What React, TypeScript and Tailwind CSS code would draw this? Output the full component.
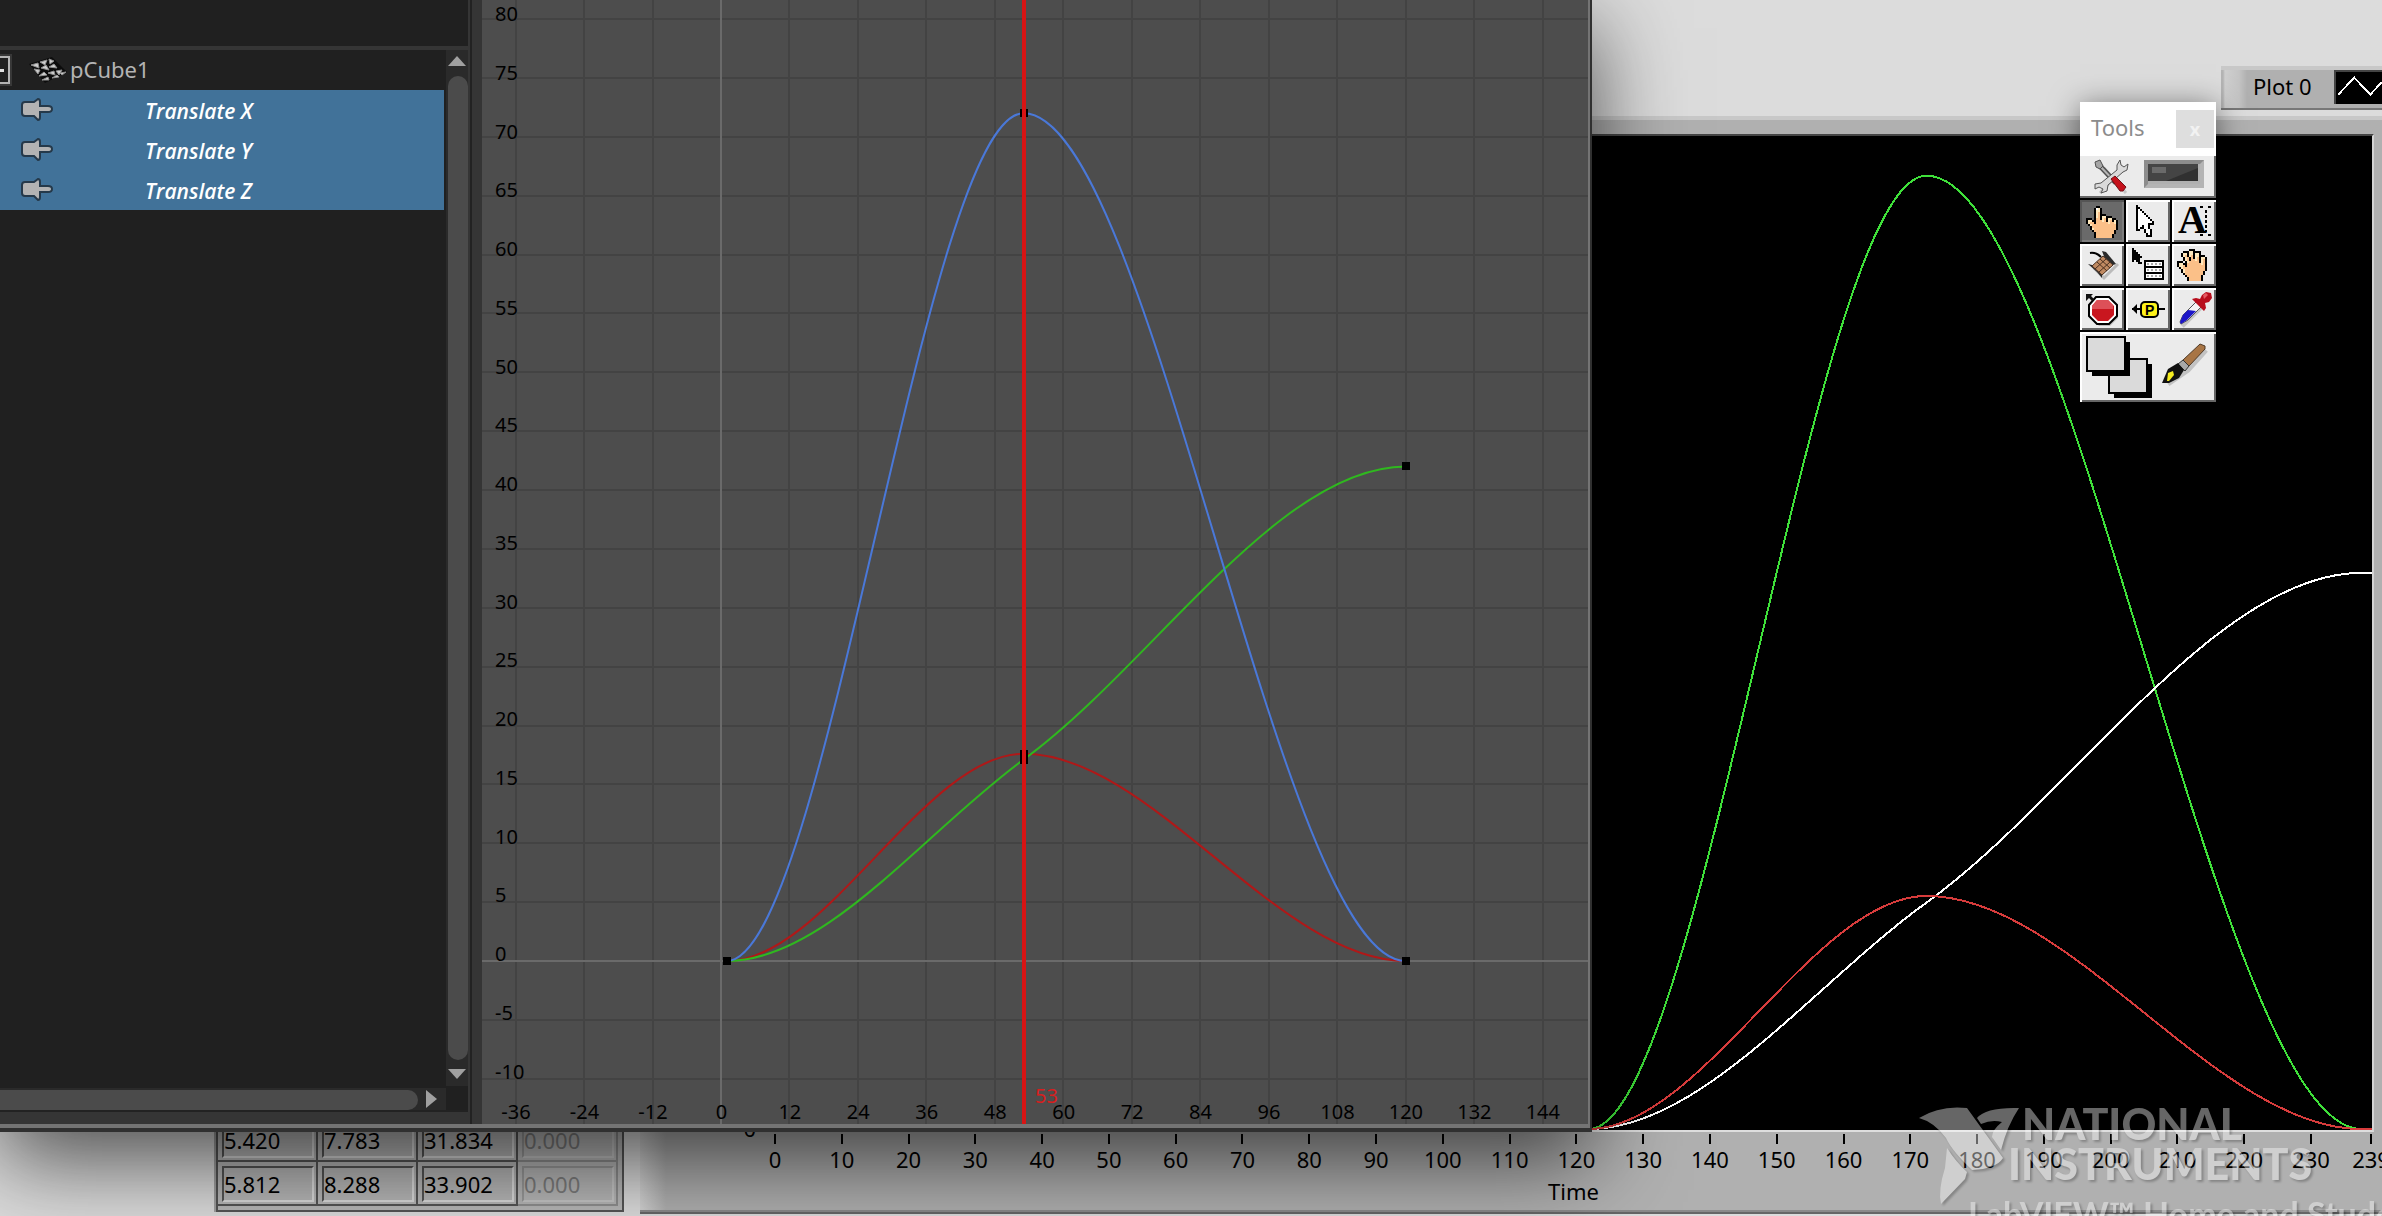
import type { ReactNode } from 'react';

// frame, value, slope
type Key = [number, number, number];

const channels: { name: string; keys: Key[]; editor: string; scope: string }[] = [
  { name: 'Translate X', keys: [[1, 0, 0], [53, 17.6, 0], [120, 0, 0]], editor: '#b01818', scope: '#d83c3c' },
  { name: 'Translate Y', keys: [[1, 0, 0], [53, 17.1, 0.353], [120, 42, 0]], editor: '#2fb81f', scope: '#ffffff' },
  { name: 'Translate Z', keys: [[1, 0, 0], [53, 72, 0], [120, 0, 0]], editor: '#4a78d8', scope: '#3fe03a' },
];

const editorX = (f: number) => 239 + f * 5.708;
const editorY = (v: number) => 961 - v * 11.775;
const scopeX = (f: number) => 814 + (f - 1) * 6.49;
const scopeY = (v: number) => 993 - v * 13.24;

const frames = Array.from({ length: 16 }, (_, i) => -36 + i * 12);
const values = Array.from({ length: 19 }, (_, i) => 80 - i * 5);
const times = [...Array.from({ length: 24 }, (_, i) => i * 10), 239];

const samples = [
  ['5.420', '7.783', '31.834', '0.000'],
  ['5.812', '8.288', '33.902', '0.000'],
];

function curve(keys: Key[], x: (f: number) => number, y: (v: number) => number) {
  let d = `M${x(keys[0][0])} ${y(keys[0][1])}`;
  for (let i = 1; i < keys.length; i++) {
    const [f0, v0, s0] = keys[i - 1];
    const [f1, v1, s1] = keys[i];
    const h = (f1 - f0) / 3;
    d += ` C${x(f0 + h)} ${y(v0 + h * s0)} ${x(f1 - h)} ${y(v1 - h * s1)} ${x(f1)} ${y(v1)}`;
  }
  return d;
}

const palette: Record<string, string> = {
  K: '#000000',
  W: '#ffffff',
  Y: '#ffe9bd',
  O: '#fbc088',
};

const pointingHand = [
  '.....KK.........',
  '....KWYK........',
  '....KYYK........',
  '....KYOK........',
  '....KYOKKK......',
  '....KYOKYYKKK...',
  'KKK.KOOKYOKYYKK.',
  'KYYKKOOOYOKYOKYK',
  'KYOOKOOOOOOYOOYK',
  '.KYOOOOOOOOOOOOK',
  '..KOOOOOOOOOOOOK',
  '..KYOOOOOOOOOOOK',
  '...KOOOOOOOOOOK.',
  '....KOOOOOOOOOK.',
  '....KOOOOOOOOK..',
  '....KOOOOOOOOK..',
];

const openHand = [
  '......KKK.......',
  '...KKKYYKKKK....',
  '..KYYKYYKYYK....',
  '..KYOKYOKYYKKK..',
  '...KYOKOKYOKYYK.',
  '...KYOKOOYOKYOK.',
  'KKK.KYOOOOOKYOK.',
  'KYYKKOOOOOOOYOK.',
  'KYYOKOOOOOOOOOK.',
  '.KYOOOOOOOOOOOK.',
  '..KYOOOOOOOOOOK.',
  '..KYOOOOOOOOOK..',
  '...KOOOOOOOOOK..',
  '....KOOOOOOOK...',
  '.....KOOOOOOK...',
  '.....KOOOOOOK...',
];

const arrowCursor = [
  'K.........',
  'KK........',
  'KWK.......',
  'KWWK......',
  'KWWWK.....',
  'KWWWWK....',
  'KWWWWWK...',
  'KWWWWWWK..',
  'KWWWWWWWK.',
  'KWWWWWKKK.',
  'KWWKWWK...',
  'KWKKWWK...',
  'KK..KWWK..',
  '....KWWK..',
  '.....KWK..',
  '.....KKK..',
];

const smallArrow = [
  'K......',
  'KK.....',
  'KKK....',
  'KKKK...',
  'KKKKK..',
  'KKKK...',
  'K.KK...',
  '...KK..',
];

function Pixels({ map, x, y }: { map: string[]; x: number; y: number }) {
  return (
    <g shapeRendering="crispEdges">
      {map.flatMap((row, r) =>
        [...row].map((c, i) =>
          c === '.' ? null : (
            <rect key={`${r}-${i}`} x={x + i * 2} y={y + r * 2} width={2} height={2} fill={palette[c]} />
          )
        )
      )}
    </g>
  );
}

const tools: { label: string; icon: ReactNode }[] = [
  { label: 'Operate value', icon: <Pixels map={pointingHand} x={6} y={6} /> },
  { label: 'Position/size/select', icon: <Pixels map={arrowCursor} x={10} y={5} /> },
  {
    label: 'Edit text',
    icon: (
      <>
        <text x="6" y="33" fontSize="40" fontWeight="bold" className="font-['Liberation_Serif']">A</text>
        <path d="M28 7h4M36 7h3M34 10v22M28 35h4M36 35h3" stroke="#000" strokeWidth="2" strokeDasharray="3 2" />
      </>
    ),
  },
  {
    label: 'Connect wire',
    icon: (
      <>
        <path d="M14 24L24 34L38 20" stroke="#bbb" strokeWidth="3" fill="none" />
        <path d="M10 9q6-1 11 4" stroke="#000" strokeWidth="2" fill="none" />
        <path d="M22 7l4 1 10 12-3 1-8-6z" fill="#2b2b2b" />
        <path d="M8 20l4 1 10 9v4l-5-6z" fill="#2b2b2b" />
        <path d="M23 12l10 9-11 10-10-9z" fill="#c08a62" stroke="#4a3020" />
        <path d="M20 15l10 9M17 18l10 9M26 15l-11 10M30 18l-11 10" stroke="#4a3020" strokeWidth="1" />
      </>
    ),
  },
  {
    label: 'Object shortcut menu',
    icon: (
      <>
        <Pixels map={smallArrow} x={6} y={4} />
        <g shapeRendering="crispEdges">
          <rect x="19" y="17" width="18" height="18" fill="#fff" stroke="#000" strokeWidth="2" />
          <path d="M19 23h18M19 29h18" stroke="#000" strokeWidth="2" />
          <path d="M21 20h14M21 26h14M21 32h14" stroke="#aaa" strokeWidth="2" strokeDasharray="2 2" />
        </g>
      </>
    ),
  },
  { label: 'Scroll window', icon: <Pixels map={openHand} x={5} y={5} /> },
  {
    label: 'Set/clear breakpoint',
    icon: (
      <>
        <path d="M17 9h13l8 8v13l-8 8H19l-8-8V17z" fill="#bdbdbd" />
        <path d="M16 9h13l8 8v11l-8 8H17l-8-8V17z" fill="#fff" stroke="#000" strokeWidth="2" />
        <path d="M17 12h11l6 6v9l-6 6H18l-6-6v-9z" fill="#c9161f" />
        <path d="M17 12h11l5 5v4H12v-3z" fill="#dd5058" />
        <path d="M6 6h7l-2 2 3 3-2 2-3-3-3 3z" fill="#111" />
      </>
    ),
  },
  {
    label: 'Probe data',
    icon: (
      <>
        <path d="M6 21h10M32 21h7" stroke="#000" strokeWidth="2" />
        <path d="M6 21l5-5v10z" fill="#000" />
        <rect x="15" y="14" width="17" height="15" rx="4" fill="#fff21a" stroke="#000" strokeWidth="2" />
        <text x="19" y="27" fontSize="14" fontWeight="bold" className="font-['Liberation_Sans']">P</text>
      </>
    ),
  },
  {
    label: 'Get color',
    icon: (
      <>
        <path d="M10 38L32 16" stroke="#c4c4c4" strokeWidth="5" />
        <path d="M8 34l3-7 13-13 5 5-13 13-7 4z" fill="#f4f4f4" stroke="#555" />
        <path d="M8 34l3-7 5-5 8 1-9 9-6 4z" fill="#1c16c8" />
        <path d="M20 11l4-1 4 1 2-4 4-3 5 1 1 5-3 4-4 1 1 5-2 3z" fill="#b80d1c" />
        <path d="M31 7l3-2 2 2-4 4z" fill="#e45a62" />
      </>
    ),
  },
];

function EditorGraph() {
  return (
    <div className="relative min-w-0 flex-1 overflow-hidden bg-[#4d4d4d] text-xl leading-6 text-black">
      <svg className="absolute inset-0 size-full" viewBox="0 0 1106 1124" preserveAspectRatio="none">
        <g shapeRendering="crispEdges" strokeWidth="2">
          {frames.map((f) => (
            <path key={f} d={`M${editorX(f)} 0V1124`} stroke="#434343" />
          ))}
          {values.map((v) => (
            <path key={v} d={`M0 ${editorY(v)}H1106`} stroke="#434343" />
          ))}
          <path d={`M${editorX(0)} 0V1124M0 ${editorY(0)}H1106`} stroke="#6a6a6a" />
        </g>
        {channels.map((c) => (
          <path key={c.name} d={curve(c.keys, editorX, editorY)} fill="none" stroke={c.editor} strokeWidth="2" />
        ))}
        {channels.flatMap((c) =>
          c.keys.map(([f, v]) => (
            <rect key={`${c.name}${f}`} x={Math.round(editorX(f)) - 4} y={Math.round(editorY(v)) - 4} width="8" height="8" />
          ))
        )}
        <path d="M542 0V1124" stroke="#d81414" strokeWidth="4" />
      </svg>
      <div className="relative flex h-full flex-col justify-between pt-5 pb-[46px] pl-[13px]">
        {values.map((v) => (
          <div key={v} className="flex h-0 items-end">
            <span className="h-[18px]">{v}</span>
          </div>
        ))}
      </div>
      <div className="absolute inset-x-0 bottom-0 flex justify-between pr-[45px] pl-[34px]">
        {frames.map((f) => (
          <div key={f} className="flex w-0 justify-center">
            <span>{f}</span>
          </div>
        ))}
      </div>
      <span className="absolute bottom-4 left-1/2 text-[#d81e1e]">53</span>
    </div>
  );
}

function ScrollArrow({ label, path }: { label: string; path: string }) {
  return (
    <button aria-label={label} className="flex shrink-0 items-center justify-center">
      <svg viewBox="0 0 20 20" className="h-5 w-5" fill="#a0a0a0">
        <path d={path} />
      </svg>
    </button>
  );
}

function Outliner() {
  return (
    <div className="flex w-[472px] shrink-0 flex-col border-r-2 border-[#222] bg-[#353535] pr-0.5">
      <div className="h-[46px] bg-[#202020]" />
      <div className="mt-1 flex min-h-0 flex-1 bg-[#202020]">
        <div className="flex flex-1 flex-col">
          <div className="flex h-10 items-center">
            <button aria-label="Collapse pCube1" className="w-3">
              <svg viewBox="0 0 12 32" className="h-8 w-3">
                <path d="M0 1h11v30H0" fill="none" stroke="#383838" strokeWidth="2" />
                <path d="M0 3h9v26H0" fill="none" stroke="#b4b4b4" strokeWidth="2" />
                <path d="M0 15h4v3H0z" fill="#e0e0e0" />
              </svg>
            </button>
            <svg viewBox="0 0 40 28" className="ml-4 h-7 w-10">
              <path d="M1 8L24 1l15 15-22 11z" fill="#0c0c0c" />
              <path d="M3 9l7-2 1 5zM12 6l7-2-2 5zM21 3l5 2-4 3zM6 13l6 1-2 4zM13 12l5-3 3 5zM21 11l5-3 3 4zM11 20l5-4 3 3zM14 24l6-3 1 3zM20 17l6-2 1 4zM28 15l6-1-3 5zM24 22l5-3 2 2zM32 17l6-1-4 3z" fill="#cfcfcf" stroke="#8f8f8f" strokeWidth="1" />
            </svg>
            <span className="ml-0.5 pb-0.5 text-[22px] leading-8 text-[#b4b4b4]">pCube1</span>
          </div>
          <ul className="mr-0.5 bg-[#417299]">
            {channels.map((c) => (
              <li key={c.name} className="flex h-10 items-center pl-5">
                <svg viewBox="0 0 34 24" className="h-6 w-[34px]">
                  <path d="M5 4h9l4-3q2 0 2 3v4h8q4 0 4 3t-4 3h-8v5q0 3-2 3l-4-4H5q-3 0-3-3V7q0-3 3-3z" fill="#b3b3b3" stroke="#25394a" strokeWidth="2" />
                </svg>
                <span className="ml-[91px] pt-0.5 font-['Open_Sans'] text-[21px] leading-6 font-semibold text-white italic">{c.name}</span>
              </li>
            ))}
          </ul>
          <div className="flex-1" />
          <div className="flex h-[22px] bg-[#2a2a2a] pt-0.5">
            <div className="h-5 flex-1 rounded-r-[10px] bg-[#4b4b4b]" />
            <ScrollArrow label="Scroll right" path="M8 0l11 9L8 18z" />
            <div className="w-2" />
          </div>
        </div>
        <div className="mb-6 flex w-[22px] flex-col bg-[#2a2a2a] pt-1 pl-0.5">
          <ScrollArrow label="Scroll up" path="M0 12L9 2l9 10z" />
          <div className="mt-0.5 flex-1 rounded-[10px] bg-[#4b4b4b]" />
          <div className="mt-1 flex h-[22px]">
            <ScrollArrow label="Scroll down" path="M0 4h18L9 14z" />
          </div>
        </div>
      </div>
      <div className="h-3.5 border-t-2 border-[#222]" />
    </div>
  );
}

function ToolsPalette() {
  return (
    <div className="absolute top-[102px] right-[166px] w-[136px] bg-white shadow-[0_4px_28px_rgba(0,0,0,0.5)]">
      <div className="flex h-[54px] items-center justify-between pr-0.5 pl-[11px]">
        <h2 className="pb-1 text-[22px] leading-6 text-[#8c8c8c]">Tools</h2>
        <button aria-label="Close" className="h-[38px] w-[38px] bg-[#dedede] text-lg leading-6 font-bold text-[#f2f2f2]">x</button>
      </div>
      <button aria-label="Automatic tool selection" className="block h-[42px] w-full bg-[#ebebeb] shadow-[inset_-2px_-2px_#666]">
        <svg viewBox="0 0 136 42" className="h-[42px] w-[136px]">
          <path d="M20 37L43 12M24 12l22 25" stroke="#c4c4c4" strokeWidth="3" />
          <path d="M20 10L36 27" stroke="#505050" strokeWidth="5" />
          <path d="M20 10L36 27" stroke="#b5b5b5" strokeWidth="2" />
          <path d="M15 6l5-2 3 6-3 3-4-2z" fill="#a5a5a5" stroke="#505050" />
          <path d="M40 4l-3 5v5L21 27l-6 1 0 5 4-2 4 2-2 4 6-2 1-6 15-13 4-2 1-6-4 3-3-2z" fill="#dadada" stroke="#555" />
          <path d="M31 23l4-3 11 11-3 4h-3z" fill="#c5121c" stroke="#701016" />
          <path d="M64 4h60v28H64z" fill="#8c8c8c" />
          <path d="M124 4v28H64l4-4h52V8z" fill="#b4b4b4" />
          <path d="M68 8h52v20H68z" fill="#b0b0b0" />
          <path d="M68 8h50v17H68z" fill="#444" />
          <path d="M118 12v13H86z" fill="#303030" />
          <path d="M72 11h14v6H72z" fill="#6a6a6a" />
        </svg>
      </button>
      <div className="grid grid-cols-3 gap-0.5 bg-black pt-0.5">
        {tools.map((t, i) => (
          <button
            key={t.label}
            aria-label={t.label}
            aria-pressed={i === 0}
            className={
              i === 0
                ? 'h-[42px] bg-[#6a6a6a] shadow-[inset_2px_2px_#555,inset_-2px_-2px_#7c7c7c]'
                : 'h-[42px] bg-[#ebebeb] shadow-[inset_2px_2px_#fff,inset_-2px_-2px_#666]'
            }
          >
            <svg viewBox="0 0 44 42" className="h-[42px] w-11">
              {t.icon}
            </svg>
          </button>
        ))}
        <button aria-label="Set color" className="col-span-3 h-[70px] bg-[#ebebeb] shadow-[inset_2px_2px_#fff,inset_-2px_-2px_#666]">
          <svg viewBox="0 0 136 70" className="h-[70px] w-[136px]">
            <g shapeRendering="crispEdges">
              <path d="M34 32h38v34H34z" fill="#000" />
              <path d="M29 27h38v34H29z" fill="#dadada" stroke="#000" strokeWidth="2" />
              <path d="M12 10h38v34H12z" fill="#000" />
              <path d="M7 5h38v34H7z" fill="#dadada" stroke="#000" strokeWidth="2" />
            </g>
            <path d="M88 52l20-14 18-20" stroke="#c2c2c2" strokeWidth="5" fill="none" />
            <path d="M103 28l17-16 5 2v3l-16 17z" fill="#a87545" stroke="#4f3a26" />
            <path d="M98 32l5-4 6 6-4 5z" fill="#a8a8a8" stroke="#333" />
            <path d="M82 51l6-14 10-6 6 7-5 8-10 5z" fill="#111" />
            <path d="M87 49l1-8 5-2 1 4-5 6z" fill="#f5ec20" />
          </svg>
        </button>
      </div>
    </div>
  );
}

function Watermark() {
  return (
    <div className="pointer-events-none absolute right-0 bottom-0 h-[112px] w-[466px] overflow-hidden font-['Lato'] font-black text-white opacity-40">
      <div className="flex [filter:drop-shadow(2px_2px_1px_rgba(0,0,0,0.6))]">
        <svg viewBox="0 0 106 112" className="h-[112px] w-[106px]" fill="#fff">
          <path d="M3 14Q24 1 51 4L87 54Q80 65 56 66Q36 47 30 34Q18 18 3 14z" />
          <path d="M31 44Q40 58 51 68L49 75L25 100Q22 86 29 64z" />
          <path d="M61 14Q70 3 103 4Q91 22 85 46L76 33Q76 26 86 18Q76 15 65 20z" />
        </svg>
        <div className="text-[43px] leading-10 whitespace-nowrap">
          <p>NATIONAL</p>
          <p className="-ml-3.5">INSTRUMENTS</p>
        </div>
      </div>
      <p className="absolute top-[90px] left-[52px] text-[34px] leading-10 font-bold whitespace-nowrap [filter:drop-shadow(2px_2px_1px_rgba(0,0,0,0.6))]">
        LabVIEW™ Home and Student Edition
      </p>
    </div>
  );
}

function ScopePanel() {
  return (
    <section className="flex min-w-0 flex-1 flex-col border-t-4 border-b-2 border-t-[#c8c8c8] border-b-[#666] bg-[#b0b0b0] bg-[linear-gradient(to_right,#d4d4d4,#b0b0b0_26px)] pt-3.5">
      <div className="flex min-h-0 flex-1">
        <div className="flex w-[135px] items-end justify-end pr-[19px] text-[22px] leading-6">
          <span className="h-4">0</span>
        </div>
        <div className="relative flex-1 border-t-2 border-r-2 border-b-2 border-t-[#444] border-r-[#d4d4d4] border-b-[#dedede] bg-black">
          <svg className="absolute inset-0 size-full" viewBox="0 0 1597 994" preserveAspectRatio="none" shapeRendering="crispEdges">
            {[channels[2], channels[1], channels[0]].map((c) => (
              <path
                key={c.name}
                d={`${curve(c.keys, scopeX, scopeY)}H1597`}
                fill="none"
                stroke={c.scope}
                strokeWidth="2"
              />
            ))}
          </svg>
        </div>
        <div className="w-2" />
      </div>
      <div className="mr-[11px] ml-[135px] flex pt-0.5 text-[22px] leading-6 text-black">
        {times.map((t) => (
          <div key={t} className={t === 239 ? 'w-0' : t === 230 ? 'flex-[9]' : 'flex-[10]'}>
            <div className="flex w-0 flex-col items-center">
              <span className="h-2.5 w-0.5 bg-black" />
              <span className="mt-[3px]">{t}</span>
            </div>
          </div>
        ))}
      </div>
      <p className="mt-2 h-[33px] pr-2.5 pl-[135px] border-b-2 border-[#8a8a8a] text-center text-[22px] leading-6 text-black">Time</p>
    </section>
  );
}

export default function App() {
  return (
    <div className="relative flex h-screen flex-col overflow-hidden bg-[#dcdcdc] font-['Noto_Sans',sans-serif]">
      <header className="flex h-[116px] shrink-0 justify-end pt-[66px]">
        <div className="flex h-11 w-[161px] border-t-4 border-b-2 border-t-[#c8c8c8] border-b-[#777] bg-[linear-gradient(to_right,#b4b4b4_2px,#cfcfcf_4px,#c4c4c4_18px,#b0b0b0_26px)] pl-8">
          <span className="w-[81px] text-[22px] leading-8 text-black">Plot 0</span>
          <svg viewBox="0 0 48 34" className="h-[34px] w-12 border-t-2 border-l-2 border-[#444] bg-black">
            <path d="M2 24L19 6l17 18L48 11" fill="none" stroke="#fff" strokeWidth="2" shapeRendering="crispEdges" />
          </svg>
        </div>
      </header>
      <main className="flex min-h-0 flex-1 pb-0.5">
        <aside className="flex w-[640px] shrink-0 items-end pb-0.5 pl-[216px]">
          <div className="border-2 border-[#555] border-t-transparent bg-[#b8b8b8] pr-1 pb-1 shadow-[-2px_0_#a0a0a0]">
            <table className="w-[400px] table-fixed border-separate border-spacing-0 text-[22px] leading-6">
              <tbody>
                {samples.map((row, r) => (
                  <tr key={r}>
                    {row.map((cell, i) => (
                      <td
                        key={i}
                        className={
                          i === 3
                            ? 'h-[42px] border-r-2 border-b-2 border-[#8f8f8f] p-1 pr-0.5 pb-0.5 text-[#7d7d7d]'
                            : 'h-[42px] border-r-2 border-b-2 border-[#555] p-1 pr-0.5 pb-0.5 text-black'
                        }
                      >
                        <div
                          className={
                            i === 3
                              ? 'border-2 border-[#9a9a9a] border-r-[#c8c8c8] border-b-[#c8c8c8] py-1'
                              : 'border-2 border-[#555] border-r-[#dcdcdc] border-b-[#dcdcdc] py-1'
                          }
                        >
                          {cell}
                        </div>
                      </td>
                    ))}
                  </tr>
                ))}
              </tbody>
            </table>
          </div>
        </aside>
        <ScopePanel />
      </main>
      <Watermark />
      <div className="absolute top-0 right-[790px] bottom-[84px] left-0 flex border-r-2 border-b-4 border-[#303030] shadow-[0_28px_84px_rgba(0,0,0,0.66)]">
        <div className="flex min-w-0 flex-1 border-r-2 border-b-4 border-[#747474] bg-[#353535]">
          <Outliner />
          <div className="w-2.5" />
          <EditorGraph />
        </div>
      </div>
      <ToolsPalette />
    </div>
  );
}
